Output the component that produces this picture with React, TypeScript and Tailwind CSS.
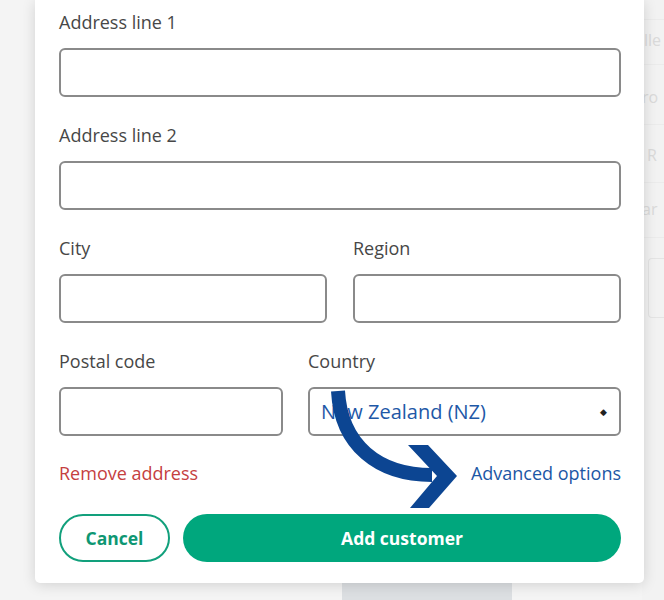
import React from 'react';

const Field: React.FC<{ label: string; className?: string; children?: React.ReactNode }> = ({ label, className, children }) => (
  <div className={className}>
    <label className="block text-[18px] leading-6 text-[#474747]">{label}</label>
    <div className="mt-[14px] flex h-[49px] items-center rounded-[6px] border-2 border-[#8a8a8a] bg-white">
      {children}
    </div>
  </div>
);

const App: React.FC = () => {
  return (
    <div className="relative h-[600px] w-[664px] overflow-hidden bg-[#f4f4f4] font-['Open_Sans',sans-serif]">
      {/* page underneath the modal */}
      <div className="flex h-full">
        <div className="flex flex-1 flex-col">
          <div className="flex-1" />
          <div className="ml-[342px] h-[17px] w-[170px] bg-[#dcdfe2]" />
        </div>
        <div className="flex w-[22px] flex-col overflow-hidden bg-[#f2f2f2] text-[16px] text-[#dadada]">
          <div className="h-[20px] border-b border-[#ebebeb]" />
          <div className="h-[45px] border-b border-[#ebebeb] pl-[2px] pt-[8px] whitespace-nowrap">lle</div>
          <div className="h-[60px] border-b border-[#ebebeb] pt-[20px] whitespace-nowrap">ro</div>
          <div className="h-[58px] border-b border-[#ebebeb] pl-[5px] pt-[18px] whitespace-nowrap">R</div>
          <div className="h-[55px] border-b border-[#ebebeb] pt-[14px] whitespace-nowrap">ar</div>
          <div className="ml-[6px] mt-[20px] h-[60px] rounded-l-[4px] border border-r-0 border-[#e4e4e4]" />
        </div>
      </div>

      {/* modal */}
      <div className="absolute left-[35px] top-0 h-[583px] w-[609px] rounded-b-[5px] bg-white pl-[24px] pr-[23px] pt-[10px] shadow-[0_2px_14px_rgba(0,0,0,0.14)]">
        <Field label="Address line 1" />
        <Field label="Address line 2" className="mt-[26px]" />
        <div className="mt-[26px] flex gap-[26px]">
          <Field label="City" className="flex-1" />
          <Field label="Region" className="flex-1" />
        </div>
        <div className="mt-[26px] flex gap-[25px]">
          <Field label="Postal code" className="w-[224px]" />
          <Field label="Country" className="flex-1">
            <div className="flex w-full items-center justify-between pl-[11px] pr-[12px]">
              <span className="text-[20px] text-[#1e58a7]">New Zealand (NZ)</span>
              <span className="text-[9px] text-[#222]">◆</span>
            </div>
          </Field>
        </div>
        <div className="mt-[25px] flex items-center justify-between text-[18px] leading-6">
          <button className="text-[#c5403f]">Remove address</button>
          <button className="text-[#1c57a5]">Advanced options</button>
        </div>
        <div className="mt-[29px] flex gap-[13px]">
          <button className="h-[48px] w-[111px] rounded-full border-2 border-[#12a07c] text-[17.5px] font-bold text-[#0e9773]">
            Cancel
          </button>
          <button className="h-[48px] flex-1 rounded-full bg-[#00a77d] text-[17.5px] font-bold text-white">
            Add customer
          </button>
        </div>
      </div>

      {/* annotation arrow */}
      <svg className="pointer-events-none absolute left-0 top-0" width="664" height="600" viewBox="0 0 664 600">
        <path d="M338 391 C341 445 378 475 432 475" fill="none" stroke="#0c4592" strokeWidth="14" />
        <polygon points="408,445 428,445 457,476 429,508 410,508 437,476" fill="#0c4592" />
      </svg>
    </div>
  );
};

export default App;
